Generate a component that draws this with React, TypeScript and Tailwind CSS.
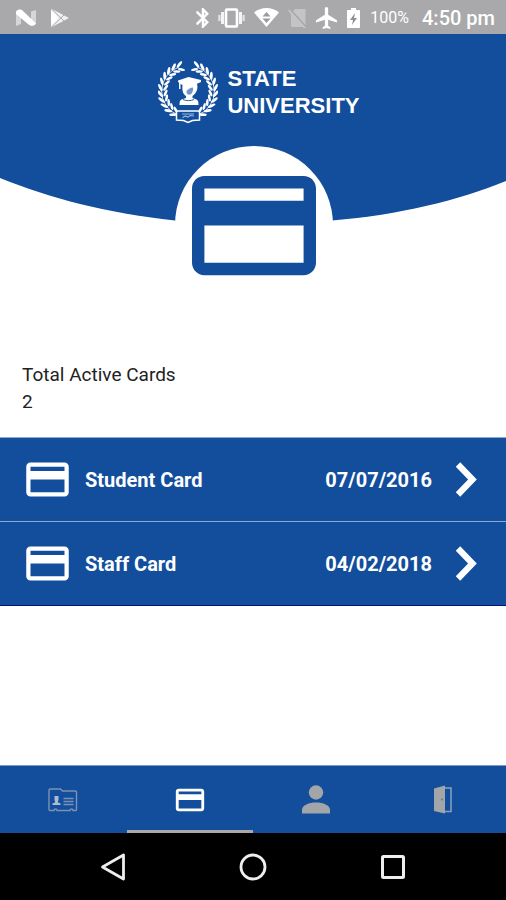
import type { ReactNode } from "react"

const cards = [
  { name: "Student Card", date: "07/07/2016" },
  { name: "Staff Card", date: "04/02/2018" },
]

const leafAngles = [-68, -55, -42, -29, -16, -3, 10, 23, 36, 49, 62]

function CardIcon({ className }: { className?: string }) {
  return (
    <svg viewBox="0 0 24 24" fill="currentColor" className={className} aria-hidden="true">
      <path d="M20 4H4c-1.11 0-2 .89-2 2v12c0 1.11.89 2 2 2h16c1.11 0 2-.89 2-2V6c0-1.11-.89-2-2-2zm0 14H4v-6h16v6zm0-10H4V6h16v2z" />
    </svg>
  )
}

function StatusBar() {
  return (
    <div className="flex h-[34px] items-center justify-between bg-[#a9a9ab] pl-4 pr-[11px] pt-px text-white">
      <div className="flex items-center gap-[14px]">
        <svg width="20" height="18" viewBox="0 0 20 18" aria-hidden="true">
          <path d="M0 2.500L5 1v14L0 17zM15 2.500L20 1v14l-5 1.500z" fill="#d6d6d7" />
          <path d="M0 2.500C2 0 5 0 7 2l13 12.500c-2 3-5.500 3-8 .5L0 5z" fill="#fff" />
        </svg>
        <svg width="20" height="20" viewBox="0 0 20 20" aria-hidden="true">
          <path d="M1 0.500L19 10 1 19.500z" fill="#f0f0f1" />
          <path d="M1 0.500L14 13M1 19.500L14 7" stroke="#a9a9ab" strokeWidth="1" />
          <path d="M1 2L8.500 10 1 18z" fill="#fff" />
        </svg>
      </div>
      <div className="flex items-center gap-[9px]">
        <svg width="13" height="20" viewBox="5 2 13 20" fill="currentColor" aria-hidden="true">
          <path
            stroke="currentColor"
            strokeWidth=".5"
            d="M17.710 7.710L12 2h-1v7.590L6.410 5 5 6.410 10.590 12 5 17.590 6.410 19 11 14.410V22h1l5.710-5.710-4.300-4.290 4.300-4.290zM13 5.830l1.880 1.880L13 9.590V5.830zm1.880 10.460L13 18.170v-3.760l1.880 1.880z"
          />
        </svg>
        <svg width="27" height="20" viewBox="0 0 27 20" aria-hidden="true">
          <rect x="8" y="1.500" width="11" height="17" rx="1" fill="none" stroke="#fff" strokeWidth="2.600" />
          <path d="M4.500 4v12M22.500 4v12" stroke="#f4f4f4" strokeWidth="3" />
          <path d="M1.400 7v6M25.600 7v6" stroke="#e4e4e5" strokeWidth="2.200" />
        </svg>
        <svg width="25" height="19" viewBox="0 0 25 19" aria-hidden="true">
          <path d="M0 4.500C7-1.500 18-1.500 25 4.500L12.500 19z" fill="#fff" />
          <path d="M12.500 4l4 4.500h-8zM12.500 15l4-4.500h-8z" fill="#9b9b9d" />
        </svg>
        <svg width="19" height="20" viewBox="0 0 19 20" aria-hidden="true">
          <path d="M7 1h10.500v18H3V6z" fill="#c4c4c5" />
          <path d="M1.500 1.500L18 20" stroke="#a9a9ab" strokeWidth="3" />
          <path d="M0.500 2L17 20" stroke="#c9c9ca" strokeWidth="1.500" />
        </svg>
        <svg width="21" height="22" viewBox="2 2 19 20" fill="currentColor" aria-hidden="true">
          <path d="M21 16v-2l-8-5V3.500c0-.83-.67-1.500-1.500-1.500S10 2.670 10 3.500V9l-8 5v2l8-2.500V19l-2 1.500V22l3.500-1 3.500 1v-1.500L13 19v-5.500l8 2.500z" />
        </svg>
        <svg width="15" height="20" viewBox="0 0 15 20" aria-hidden="true">
          <path d="M5 0h5v2h3c.6 0 1 .4 1 1v16c0 .6-.4 1-1 1H2c-.6 0-1-.4-1-1V3c0-.6.4-1 1-1h3z" fill="#fff" />
          <path d="M9 5l-5 7h3l-1 5 5-7H8z" fill="#8f8f91" />
        </svg>
        <span className="text-[16px] leading-5">100%</span>
        <span className="pl-1 text-[20px] font-medium leading-5">4:50 pm</span>
      </div>
    </div>
  )
}

function Crest() {
  return (
    <svg width="60" height="64" viewBox="0 0 60 64" fill="#fff" aria-hidden="true">
      {/* laurel, left branch and its mirror */}
      {[1, -1].map((side) => (
        <g key={side} transform={side === 1 ? undefined : "translate(60 0) scale(-1 1)"}>
          <path d="M21 6A25.500 25.500 0 0 0 20 54" fill="none" stroke="#fff" strokeWidth=".8" />
          {leafAngles.map((a) => (
            <g key={a} transform={`rotate(${-a} 30 30)`}>
              <ellipse cx="2.200" cy="28" rx="1.400" ry="4" transform="rotate(-30 2.200 28)" />
              <ellipse cx="7.600" cy="28" rx="1.300" ry="3.600" transform="rotate(34 7.600 28)" />
            </g>
          ))}
        </g>
      ))}
      {/* graduate */}
      <path d="M20 19.500l10.500-3.500L43 19v2l-4 1.800c1.200 5-.2 9.200-4.500 12.200v2l4 1.500c1.500.7 2 2 2 5.500h-19c0-3.500.5-4.800 2-5.500l4.500-1.500v-2c-3-2-4-5-3.500-11L22.500 23v5H21v-6.500l-1-.500z" />
      <path d="M28.500 31c0-2.500 2-2 3.500-4l3-.5c.5 3-.5 5.500-2.500 7-2.500.5-4-.5-4-2.500z" fill="#134e9d" opacity=".6" />
      <path d="M25 38.500c3 1.500 8 1.500 11 0" fill="none" stroke="#134e9d" strokeWidth=".9" />
      {/* plaque */}
      <path d="M20 50h20c.8 0 1.500.7 1.500 1.500v7.500l-7 .5-4.500 2-4.500-2-7-.5v-7.500c0-.8.700-1.500 1.500-1.500z" fill="#134e9d" stroke="#fff" strokeWidth="1.500" />
      <path d="M24 53h12M24.500 56.500l3-1.500 2 1 3-1.500 3.500.5" fill="none" stroke="#9fb8dc" strokeWidth="1.200" />
    </svg>
  )
}

function Header() {
  return (
    <header>
      <div className="flex h-25 items-start justify-center gap-[9px] bg-[#134e9d] pl-3 pt-[27px]">
        <Crest />
        <h1 className="pt-1 font-['Liberation_Sans',Arial,sans-serif] text-[22px] font-bold leading-[27px] text-white">
          STATE
          <br />
          UNIVERSITY
        </h1>
      </div>
      <svg viewBox="0 134 506 146" className="block w-full" aria-hidden="true">
        <path d="M0 133H506V181C459 200 400 215 332 220.500L254 226 175 220.500C105 213 50 198 0 178z" fill="#134e9d" />
        <circle cx="254" cy="225" r="79" fill="#fff" />
        <path
          transform="translate(179.600 151.200) scale(6.200)"
          fill="#134e9d"
          d="M20 4H4c-1.110 0-2 .89-2 2v12c0 1.110.89 2 2 2h16c1.110 0 2-.89 2-2V6c0-1.110-.89-2-2-2zm0 14H4v-6h16v6zm0-10H4V6h16v2z"
        />
      </svg>
    </header>
  )
}

function CardRow({ name, date }: { name: string; date: string }) {
  return (
    <li className="border-t border-[#8fa9d3]">
      <button type="button" className="flex h-[83px] w-full items-center pl-[22px] pr-[29px] text-[20px] font-bold text-white">
        <CardIcon className="size-[51px]" />
        <span className="pl-3">{name}</span>
        <span className="ml-auto pr-[23px]">{date}</span>
        <svg width="22" height="35" viewBox="0 0 22 35" fill="none" aria-hidden="true">
          <path d="M3 2.500L17.500 17.500 3 32.500" stroke="#fff" strokeWidth="6.200" />
        </svg>
      </button>
    </li>
  )
}

function Tab({ label, active, children }: { label: string; active?: boolean; children: ReactNode }) {
  return (
    <button
      type="button"
      aria-label={label}
      className={
        active
          ? "flex h-full flex-1 items-center justify-center border-b-[3px] border-[#a9a9ab] pt-[3px] text-white"
          : "flex h-full flex-1 items-center justify-center border-b-[3px] border-transparent pt-[3px] text-[#a3a6a8]"
      }
    >
      {children}
    </button>
  )
}

function TabBar() {
  return (
    <nav className="flex h-17 border-t border-[#7f9ac8] bg-[#134e9d]">
      <Tab label="ID">
        <svg width="30" height="24" viewBox="0 0 30 24" fill="none" stroke="#7c91b4" aria-hidden="true">
          <path
            strokeWidth="1.400"
            d="M2 1h10.500l2 2H27.500c.6 0 1 .4 1 1v17.500c0 .6-.4 1-1 1H25c0-2-3-2-3 0H9c0-2-3-2-3 0H2c-.6 0-1-.4-1-1V2c0-.6.4-1 1-1z"
          />
          <path strokeWidth="1.600" d="M15.500 10.500h10M15.500 13.500h10M15.500 16.500h10" />
          <path fill="#aebbd0" stroke="none" d="M6.500 8h4v4l-.8 2.200 2.800 1.300v1.500H4.500v-1.500l2.800-1.300L6.500 12z" />
        </svg>
      </Tab>
      <Tab label="Cards" active>
        <CardIcon className="size-[34px]" />
      </Tab>
      <Tab label="Profile">
        <svg width="28" height="29" viewBox="0 0 28 29" fill="currentColor" aria-hidden="true">
          <circle cx="14" cy="7.500" r="7.200" />
          <path d="M0 28.500v-3.500C0 20 7 17.500 14 17.500S28 20 28 25v3.500z" />
        </svg>
      </Tab>
      <Tab label="Log out">
        <svg width="20" height="29" viewBox="0 0 20 29" aria-hidden="true">
          <path d="M1 3.500L12 .5v28L1 26z" fill="currentColor" />
          <path d="M12 3h6v23.500h-6" fill="none" stroke="#8fa0bb" strokeWidth="1.500" />
          <circle cx="9" cy="14.500" r="1" fill="#6f7780" />
        </svg>
      </Tab>
    </nav>
  )
}

function SystemNav() {
  return (
    <div className="flex h-[67px] items-center justify-center bg-black">
      <button type="button" aria-label="Back" className="flex w-35 justify-center">
        <svg width="26" height="28" viewBox="0 0 26 28" fill="none" aria-hidden="true">
          <path d="M23.500 2v24L2.500 14z" stroke="#eee" strokeWidth="2.800" strokeLinejoin="round" />
        </svg>
      </button>
      <button type="button" aria-label="Home" className="flex w-35 justify-center">
        <svg width="28" height="28" viewBox="0 0 28 28" fill="none" aria-hidden="true">
          <circle cx="14" cy="14" r="12" stroke="#eee" strokeWidth="2.800" />
        </svg>
      </button>
      <button type="button" aria-label="Recent apps" className="flex w-35 justify-center">
        <svg width="26" height="26" viewBox="0 0 26 26" fill="none" aria-hidden="true">
          <rect x="2.500" y="2.500" width="21" height="21" rx="1" stroke="#eee" strokeWidth="3" />
        </svg>
      </button>
    </div>
  )
}

export default function App() {
  return (
    <div className="flex min-h-screen flex-col bg-white font-[Roboto,sans-serif]">
      <StatusBar />
      <Header />
      <main className="flex-1">
        <div className="px-[22px] pb-[22px] pt-[81px] text-[19px] leading-[27px] text-[#222]">
          <p>Total Active Cards</p>
          <p>2</p>
        </div>
        <ul className="border-b border-[#00107f] bg-[#134e9d]">
          {cards.map((card) => (
            <CardRow key={card.name} name={card.name} date={card.date} />
          ))}
        </ul>
      </main>
      <TabBar />
      <SystemNav />
    </div>
  )
}
